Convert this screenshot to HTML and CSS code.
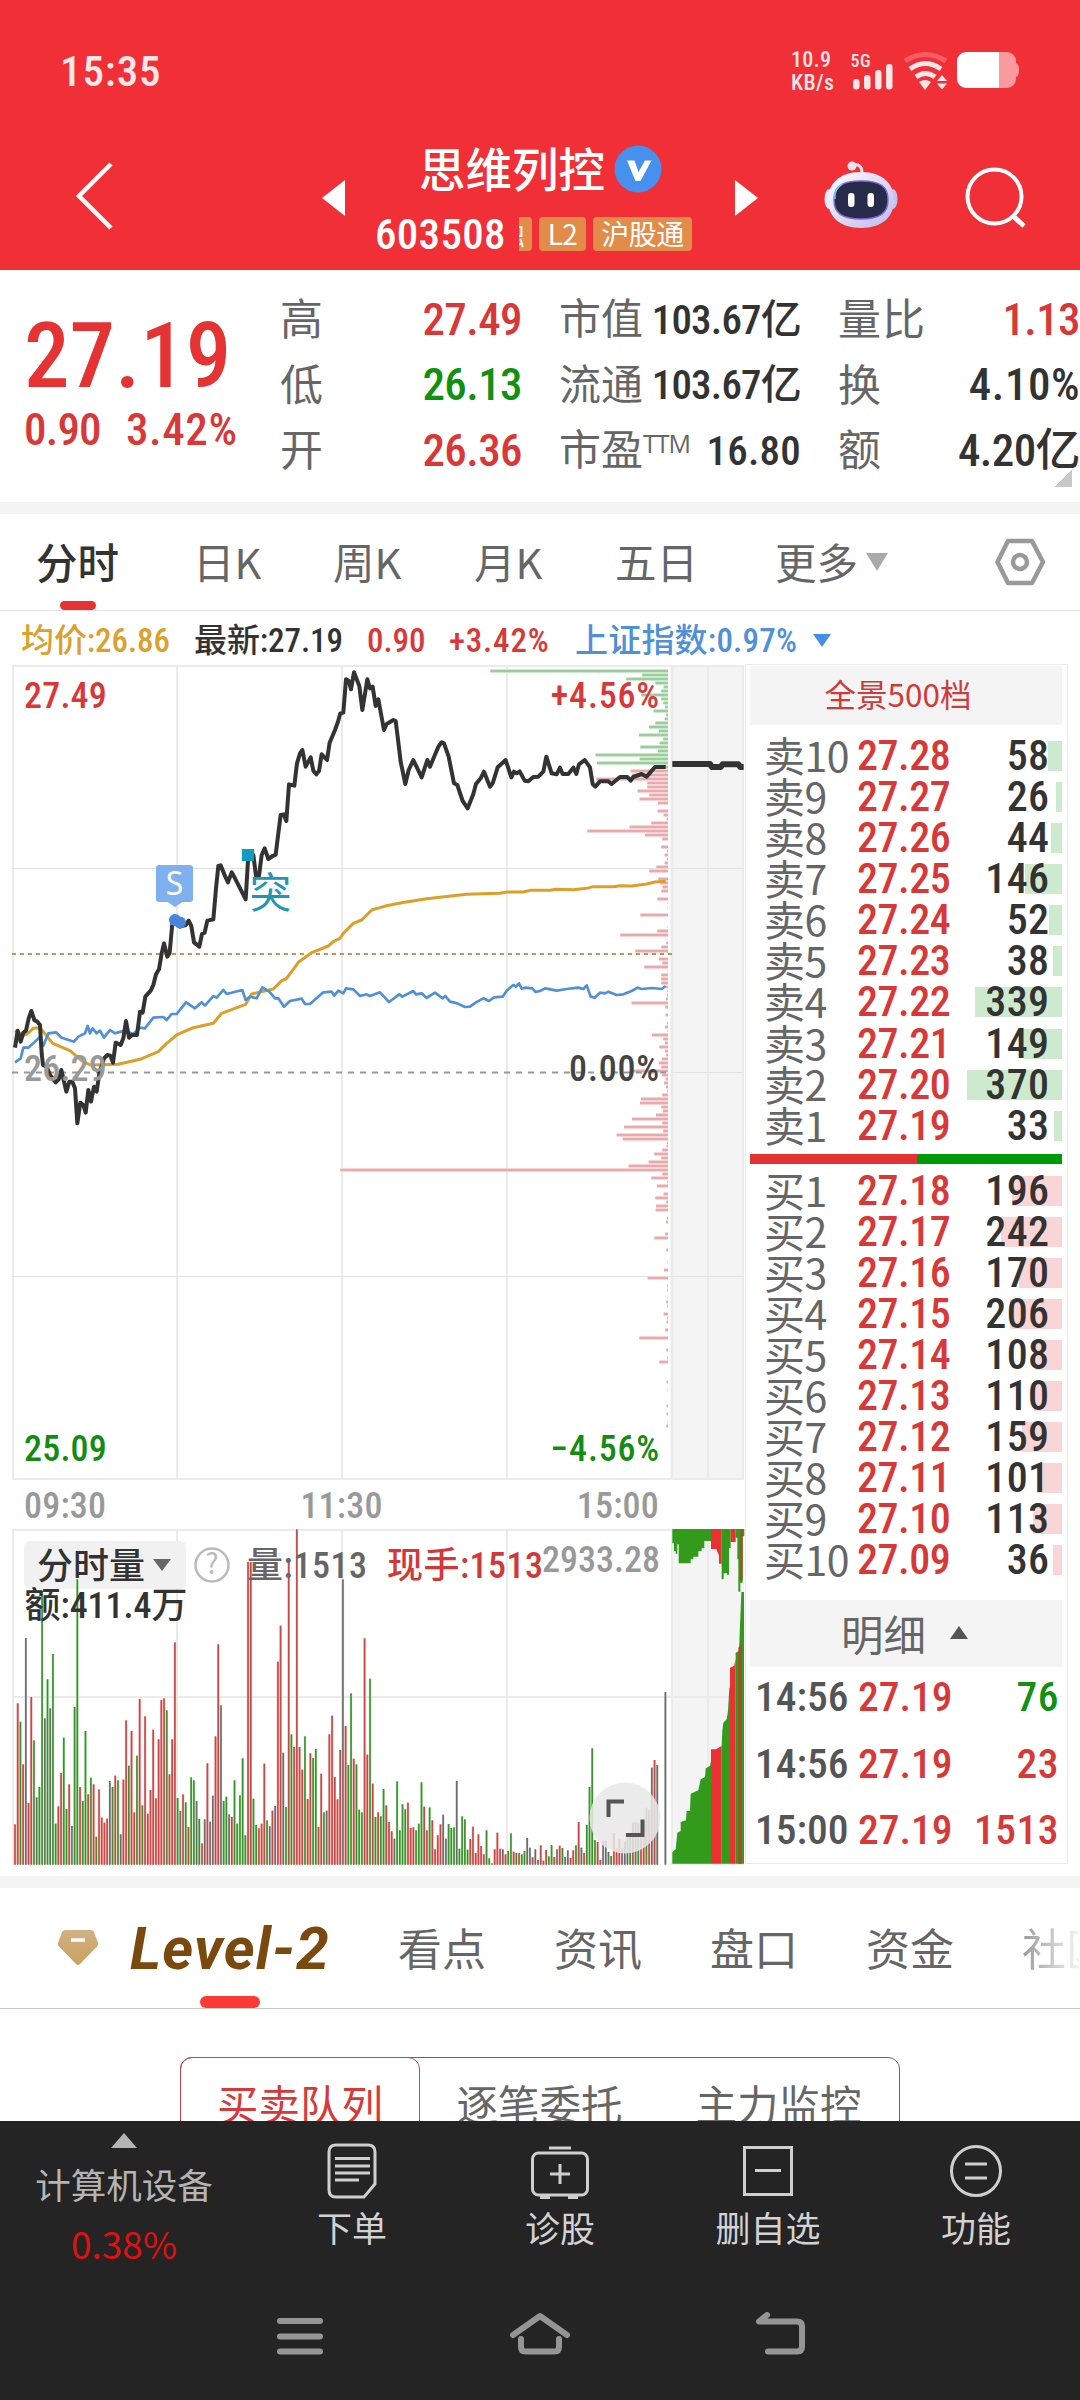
FILE: index.html
```html
<!DOCTYPE html>
<html lang="zh-CN">
<head>
<meta charset="utf-8">
<title>思维列控 603508</title>
<link rel="stylesheet" href="styles.css">
</head>
<body>
<div class="screen">

<header class="top">
  <div class="status">
    <span class="clock">15:35</span>
    <div class="net"><span>10.9</span><span>KB/s</span></div>
    <svg class="status-icons" width="170" height="44" viewBox="850 50 170 44">
      <text x="850.5" y="67.500" class="g5">5G</text>
      <g fill="#ffe6e7">
        <rect x="853" y="80" width="6.500" height="10.500" rx="3"/>
        <rect x="864" y="76" width="6.500" height="14.500" rx="3"/>
        <rect x="875" y="71" width="6.500" height="19.500" rx="3"/>
        <rect x="886" y="65" width="6.500" height="25.500" rx="3"/>
        <path d="M919 83q6-4 12 0l-6 8z"/>
        <path d="M942 76l5 6h-10zM942 90.500l5-6h-10z"/>
      </g>
      <g fill="none" stroke="#ffe6e7" stroke-width="5">
        <path d="M905 62q20-13 41 0" opacity=".25"/>
        <path d="M910 70q15-11 31 0"/>
        <path d="M916 78q9.500-7 19 0"/>
      </g>
      <path d="M998 53h9a9 9 0 0 1 9 9v2q3 1 3 7t-3 7v2a9 9 0 0 1-9 9h-9z" fill="#fa9a9e"/>
      <path d="M966 53h33v36h-33a9 9 0 0 1-9-9v-18a9 9 0 0 1 9-9z" fill="#fff"/>
    </svg>
  </div>
  <nav class="titlebar">
    <svg class="back" width="40" height="70" viewBox="0 0 40 70"><path d="M36 4L4 36l32 32" fill="none" stroke="#fff" stroke-width="4.500"/></svg>
    <svg width="23" height="36" viewBox="0 0 23 36"><path d="M23 0v36L0 18z" fill="#fff"/></svg>
    <div class="stock">
      <div class="name"><span>思维列控</span>
        <svg width="48" height="48" viewBox="0 0 48 48"><circle cx="24" cy="24" r="23.500" fill="#4690ee"/><path d="M13 15.500h7.500l4 11.500 6.500-11.500h6.500L26.500 36h-5z" fill="#fff"/></svg>
      </div>
      <div class="code"><span class="num">603508</span><span class="tag cut"><i>融</i></span><span class="tag">L2</span><span class="tag wide">沪股通</span></div>
    </div>
    <svg width="23" height="36" viewBox="0 0 23 36"><path d="M0 0v36l23-18z" fill="#fff"/></svg>
    <svg class="robot" width="74" height="68" viewBox="824 161 74 68">
      <defs><linearGradient id="shell" x1="0" y1="0" x2="1" y2="1"><stop offset="0" stop-color="#fff"/><stop offset="1" stop-color="#bdb9ec"/></linearGradient></defs>
      <path d="M852 166c6-3 10 0 10 7" fill="none" stroke="#e6e2f6" stroke-width="3"/>
      <circle cx="852" cy="166" r="4.500" fill="#f1dfe9"/>
      <ellipse cx="829" cy="199" rx="4.500" ry="10" fill="#e8e6fa"/><ellipse cx="893" cy="199" rx="4.500" ry="10" fill="#c5c2ee"/>
      <path d="M861 172c23 0 33 13 33 28 0 17-12 28-33 28s-33-11-33-28c0-15 10-28 33-28z" fill="url(#shell)"/>
      <path d="M861 181c20 0 27 6 27 19s-8 19-27 19-27-6-27-19 7-19 27-19z" fill="#252b49" stroke="#8065d2" stroke-width="1.500"/>
      <path d="M842 184q-8 5-7 15" fill="none" stroke="#78cfe7" stroke-width="1.500"/>
      <rect x="848" y="193" width="6.500" height="14" rx="3" fill="#fff"/><rect x="867.500" y="193" width="6.500" height="14" rx="3" fill="#fff"/>
    </svg>
    <svg class="search" width="64" height="64" viewBox="964 166 64 64"><g fill="none" stroke="#fff" stroke-width="4"><circle cx="994.500" cy="196.500" r="27"/><path d="M1013 216l11 10" stroke-width="5"/></g></svg>
  </nav>
</header>

<section class="quote">
  <div class="last">
    <div class="big">27.19</div>
    <div class="chg"><span>0.90</span><span>3.42%</span></div>
  </div>
  <dl class="stats">
    <div><dt>高</dt><dd class="red">27.49</dd></div>
    <div><dt>低</dt><dd class="green">26.13</dd></div>
    <div><dt>开</dt><dd class="red">26.36</dd></div>
  </dl>
  <dl class="stats mid">
    <div><dt>市值</dt><dd>103.67亿</dd></div>
    <div><dt>流通</dt><dd>103.67亿</dd></div>
    <div><dt>市盈<sup>TTM</sup></dt><dd class="pe">16.80</dd></div>
  </dl>
  <dl class="stats end">
    <div><dt>量比</dt><dd class="red">1.13</dd></div>
    <div><dt>换</dt><dd class="rate">4.10%</dd></div>
    <div><dt>额</dt><dd>4.20亿</dd></div>
  </dl>
  <i class="corner"></i>
</section>

<nav class="periods">
  <span class="on">分时</span><span>日K</span><span>周K</span><span>月K</span><span>五日</span><span>更多</span>
  <svg class="more" width="24" height="20" viewBox="0 0 24 20"><path d="M1 1h22L12 19z" fill="#aaa"/></svg>
  <svg class="hex" width="50" height="48" viewBox="0 0 50 48"><g fill="none" stroke="#999" stroke-width="4.500" stroke-linejoin="round"><path d="M13 3h24l11 21-11 21H13L2.500 24z"/><circle cx="25" cy="24" r="7"/></g></svg>
</nav>

<main class="market">
  <section class="charts">
    <div class="legend">
      <span class="gold">均价:26.86</span><span>最新:27.19</span><span class="red">0.90</span><span class="red">+3.42%</span><span class="blue">上证指数:0.97%</span>
      <svg width="20" height="15" viewBox="0 0 20 15"><path d="M1 1h18l-9 13z" fill="#4490e6"/></svg>
    </div>
    <svg class="price" width="745" height="815" viewBox="0 665 745 815">
      <rect x="672" y="665" width="72" height="814" fill="#f4f4f4"/>
      <g stroke="#ebebeb" stroke-width="2" fill="none">
        <path d="M13 665v815M177 665v815M342 665v815M507 665v815M743 665v815M708 665v815M12 666h732M12 1479h732"/>
        <path d="M672 665v815" stroke-width="3"/>
        <path d="M12 868.500h732M12 1276.500h732M672 1072.500h72" stroke="#e2e2e2" stroke-width="1"/>
      </g>
      <g id="profile"></g>
      <path d="M12 1072.500h654" stroke="#999" stroke-width="2" stroke-dasharray="6 6"/>
      <path d="M12 954h660" stroke="#cb9151" stroke-width="2" stroke-dasharray="4 4"/>
      <g transform="translate(0 640) scale(.33333)" fill="none" stroke-linejoin="round">
        <polyline stroke="#dd9f28" stroke-width="9" points="45,1172 70,1185 80,1183 100,1165 120,1163 158,1210 210,1232 245,1262 270,1275 355,1273 420,1258 475,1235 500,1210 530,1185 580,1163 640,1150 665,1120 737,1093 755,1062 820,1047 845,1022 858,1017 880,988 895,967 935,938 985,918 1000,905 1020,895 1030,880 1060,850 1085,840 1115,810 1140,803 1160,797 1205,788 1280,776 1400,763 1500,760 1520,756 1570,756 1590,751 1650,751 1670,748 1720,749 1760,745 1780,740 1840,740 1860,737 1895,738 1940,732 1965,726 1997,724"/>
        <polyline stroke="#4f90d9" stroke-width="8" points="45,1267 62,1255 70,1223 85,1223 100,1210 120,1190 130,1217 145,1180 168,1177 185,1193 222,1205 235,1190 255,1180 263,1158 270,1180 278,1165 290,1180 300,1172 312,1193 330,1170 345,1180 375,1172 400,1182 420,1163 435,1165 460,1133 490,1131 500,1140 515,1122 530,1122 558,1087 585,1105 605,1087 615,1097 640,1068 650,1073 670,1050 680,1062 727,1050 737,1080 750,1070 770,1075 787,1042 808,1055 825,1075 835,1075 852,1100 870,1083 905,1076 915,1092 930,1092 970,1057 995,1055 1003,1067 1015,1052 1030,1060 1038,1045 1060,1048 1080,1068 1100,1063 1110,1068 1140,1057 1167,1086 1198,1063 1207,1070 1240,1053 1248,1063 1265,1060 1280,1074 1305,1058 1328,1075 1336,1068 1350,1085 1372,1090 1395,1101 1410,1100 1428,1087 1450,1075 1467,1083 1482,1072 1508,1070 1520,1052 1540,1035 1548,1040 1557,1030 1565,1046 1575,1043 1597,1045 1607,1056 1620,1053 1635,1045 1670,1052 1700,1047 1735,1043 1750,1047 1760,1036 1772,1070 1784,1073 1800,1058 1815,1060 1825,1055 1850,1065 1870,1063 1895,1053 1913,1043 1925,1047 1955,1044 1985,1047 1997,1038"/>
        <polyline stroke="#333" stroke-width="12" points="45,1223 53,1172 62,1205 70,1178 78,1172 86,1135 94,1113 103,1140 112,1145 120,1155 125,1240 129,1275 140,1280 150,1305 167,1327 176,1318 184,1290 199,1355 208,1325 217,1325 225,1345 232,1450 241,1388 250,1395 257,1418 265,1350 273,1385 282,1340 290,1355 298,1300 312,1255 322,1245 331,1247 339,1268 347,1208 362,1215 370,1195 378,1143 387,1193 396,1185 411,1185 420,1115 428,1118 436,1070 452,1052 460,1035 468,1003 477,988 485,940 492,910 502,950 509,938 517,850 523,830 540,860 557,855 566,842 574,858 582,907 598,920 606,882 614,878 622,842 640,838 648,745 655,678 662,676 675,708 684,727 695,697 705,715 737,778 745,645 760,645 768,708 777,708 785,645 794,625 805,657 818,648 827,644 835,580 842,525 851,523 859,543 867,433 883,437 891,370 900,340 907,330 917,380 932,352 940,392 949,403 957,393 965,343 981,360 989,308 1005,270 1014,245 1021,220 1030,218 1038,118 1046,122 1053,148 1062,97 1078,138 1087,210 1102,118 1110,145 1118,140 1127,198 1135,178 1152,270 1160,252 1180,240 1187,243 1193,290 1202,365 1216,432 1226,390 1240,360 1265,412 1282,360 1290,380 1315,320 1325,307 1332,310 1346,350 1355,395 1362,430 1372,435 1388,483 1403,505 1420,462 1428,432 1442,415 1452,395 1470,440 1478,430 1493,382 1503,373 1517,360 1534,412 1542,395 1550,400 1559,394 1574,422 1585,424 1600,411 1615,410 1630,395 1639,350 1655,400 1670,403 1680,383 1688,402 1705,402 1720,383 1729,402 1737,373 1754,360 1770,382 1778,432 1786,440 1800,424 1825,424 1835,432 1860,411 1882,411 1892,422 1900,411 1925,402 1940,410 1965,381 1997,381"/>
        <polyline stroke="#333" stroke-width="18" points="2017,372 2130,372 2136,381 2162,381 2168,373 2215,373 2221,381 2231,381"/>
      </g>
      <rect x="156" y="865" width="37" height="37" rx="3" fill="#7fb1f1"/><path d="M166 901h18l-9 6z" fill="#7fb1f1"/>
      <text x="174.500" y="895" class="s-mark">S</text>
      <circle cx="175" cy="920" r="6" fill="#4787de"/><circle cx="180" cy="922.500" r="6" fill="#4787de"/>
      <rect x="242" y="849" width="12" height="12" fill="#0f9dc0"/>
      <text x="249.500" y="908" class="tu">突</text>
      <g class="axis">
        <text x="24" y="708" fill="#d93838">27.49</text>
        <text x="660" y="708" fill="#d93838" text-anchor="end" class="pct">+4.56%</text>
        <text x="24" y="1080.500" fill="#999">26.29</text>
        <text x="660" y="1080.500" fill="#444" text-anchor="end" class="pct">0.00%</text>
        <text x="24" y="1461" fill="#128d12">25.09</text>
        <text x="660" y="1461" fill="#128d12" text-anchor="end" class="pct">−4.56%</text>
      </g>
    </svg>
    <div class="times"><span>09:30</span><span>11:30</span><span>15:00</span></div>
    <svg class="volume" width="745" height="336" viewBox="0 1528 745 336">
      <rect x="672" y="1528" width="72" height="335" fill="#f4f4f4"/>
      <g stroke="#ebebeb" stroke-width="2" fill="none">
        <path d="M13 1528v336M177 1528v336M342 1528v336M507 1528v336M672 1528v336M708 1528v336M12 1529h732M12 1696h732M670 1863h74"/>
      </g>
      <rect x="24" y="1540" width="162" height="48" rx="6" fill="#f1f1f1"/>
      <g id="bars"></g>
      <g transform="translate(370 1500) scale(.33333)">
        <g fill="#329b1c">
          <path d="M907 84v43h5v23h5v8h5v-28h4v57h36v-12h8v-8h15v-16h10v-9h8v-22h20V84zM1055 84v151h6v-18h10v4h6v-80h5V84zM1097 84v26h5v65h3v97h6v-27h7V106h5V84z"/>
          <path d="M907 1088v-35l10-8 5-50 10-5v-27l16-5 2-28h10l2-52 23-10 7-33 13-7 2-26 13-7 3-15v308zM1055 1088V735l2-45 3-25 10-10 4-25 4-70h2v528zM1097 1088V455l10-5 7-177h8v815z"/>
        </g>
        <g fill="#e83130">
          <path d="M1023 84v60h16l8 20v24h8V84zM1082 84v39h15V84z"/>
          <path d="M1023 1088V745h15l17-10v353zM1080 1088V500l12-5 5-20v613z"/>
        </g>
        <path d="M1105 1088V440l10-12v660zM1111 84h7v152h-7z" fill="#a44f28"/>
      </g>
      <circle cx="625" cy="1817" r="35.500" fill="#e8e8e8" fill-opacity=".86"/>
      <path d="M608.500 1816v-15.500H624M626 1834h16.500v-15.500" fill="none" stroke="#555" stroke-width="4"/>
      <text x="37" y="1578" class="vt dark">分时量</text>
      <path d="M153 1558h18l-9 12z" fill="#666"/>
      <circle cx="212" cy="1564" r="16.500" fill="none" stroke="#bbb" stroke-width="2.500"/>
      <text x="212" y="1573" class="qm">?</text>
      <text x="247" y="1577" class="vt" fill="#666" textLength="120">量:1513</text>
      <text x="387" y="1577" class="vt" fill="#d13838" textLength="156">现手:1513</text>
      <text x="660" y="1571" class="vt" fill="#999" text-anchor="end">2933.28</text>
      <text x="24.500" y="1617" class="vt dark" textLength="163">额:411.4万</text>
    </svg>
  </section>

  <aside class="book">
    <button class="depth">全景500档</button>
    <ul class="levels">
      <li>卖10<b>27.28</b><em>58</em><i style="width:14px"></i></li>
      <li>卖9<b>27.27</b><em>26</em><i style="width:6px"></i></li>
      <li>卖8<b>27.26</b><em>44</em><i style="width:11px"></i></li>
      <li>卖7<b>27.25</b><em>146</em><i style="width:37px"></i></li>
      <li>卖6<b>27.24</b><em>52</em><i style="width:13px"></i></li>
      <li>卖5<b>27.23</b><em>38</em><i style="width:9px"></i></li>
      <li>卖4<b>27.22</b><em>339</em><i style="width:87px"></i></li>
      <li>卖3<b>27.21</b><em>149</em><i style="width:38px"></i></li>
      <li>卖2<b>27.20</b><em>370</em><i style="width:95px"></i></li>
      <li>卖1<b>27.19</b><em>33</em><i style="width:8px"></i></li>
    </ul>
    <div class="ratio"><i></i></div>
    <ul class="levels buy">
      <li>买1<b>27.18</b><em>196</em><i style="width:50px"></i></li>
      <li>买2<b>27.17</b><em>242</em><i style="width:61px"></i></li>
      <li>买3<b>27.16</b><em>170</em><i style="width:43px"></i></li>
      <li>买4<b>27.15</b><em>206</em><i style="width:52px"></i></li>
      <li>买5<b>27.14</b><em>108</em><i style="width:27px"></i></li>
      <li>买6<b>27.13</b><em>110</em><i style="width:28px"></i></li>
      <li>买7<b>27.12</b><em>159</em><i style="width:40px"></i></li>
      <li>买8<b>27.11</b><em>101</em><i style="width:25px"></i></li>
      <li>买9<b>27.10</b><em>113</em><i style="width:29px"></i></li>
      <li>买10<b>27.09</b><em>36</em><i style="width:9px"></i></li>
    </ul>
    <button class="detail">明细<svg width="18" height="13" viewBox="0 0 18 13"><path d="M0 13L9 0l9 13z" fill="#555"/></svg></button>
    <ul class="ticks">
      <li><span>14:56</span><b>27.19</b><em class="green">76</em></li>
      <li><span>14:56</span><b>27.19</b><em>23</em></li>
      <li><span>15:00</span><b>27.19</b><em>1513</em></li>
    </ul>
  </aside>
</main>

<nav class="tabs">
  <svg width="44" height="40" viewBox="0 0 44 40"><defs><linearGradient id="gem" x1="0" y1="0" x2="0" y2="1"><stop offset="0" stop-color="#d1b084"/><stop offset="1" stop-color="#c8a25e"/></linearGradient></defs><path d="M9 2h26q2 0 3 2l4 11q.5 2-1 3.500L24 36q-2 2-4 0L3 18.500Q1.500 17 2 15L6 4q1-2 3-2z" fill="url(#gem)"/><path d="M15 12h14" stroke="#fff" stroke-width="3.500"/></svg>
  <span class="level">Level-2</span><span>看点</span><span>资讯</span><span>盘口</span><span>资金</span><span class="fade">社区</span>
</nav>

<div class="queue"><div class="seg"><span class="on">买卖队列</span><span>逐笔委托</span><span>主力监控</span></div></div>

<footer class="dock">
  <div class="actions">
    <div class="sector"><svg width="26" height="15" viewBox="0 0 26 15"><path d="M0 15L13 0l13 15z" fill="#b4b4b4"/></svg><span>计算机设备</span><b>0.38%</b></div>
    <div class="act"><svg width="60" height="60" viewBox="0 0 60 60"><path d="M14 4h32q7 0 7 7v32L42 56H14q-7 0-7-7V11q0-7 7-7z"/><path d="M13 17.500h35M13 25h35M13 32h35M13 39h24"/></svg><span>下单</span></div>
    <div class="act"><svg width="60" height="60" viewBox="0 0 60 60"><rect x="2.500" y="12" width="55" height="42" rx="6"/><path d="M19 7h22M20 33h20M30 23v20"/><path d="M10 56h10M38 56h10" stroke-width="4"/></svg><span>诊股</span></div>
    <div class="act"><svg width="60" height="60" viewBox="0 0 60 60"><rect x="6.500" y="6.500" width="47" height="47"/><path d="M17 29.500h26"/></svg><span>删自选</span></div>
    <div class="act"><svg width="60" height="60" viewBox="0 0 60 60"><circle cx="30" cy="30" r="24.500"/><path d="M19 23h22M19 37h22"/></svg><span>功能</span></div>
  </div>
  <div class="sysnav">
    <svg width="60" height="50" viewBox="0 0 60 50"><path d="M10 9h40M10 24.500h40M10 39.500h40"/></svg>
    <svg width="60" height="50" viewBox="0 0 60 50"><path d="M3 23L30 4l27 19M11 27v8q0 4.500 4.500 4.500h29q4.500 0 4.500-4.500v-8" stroke-linejoin="round"/></svg>
    <svg width="60" height="50" viewBox="0 0 60 50"><path d="M17 3L9 9.500h38q5 0 5 5v20q0 5-5 5H18" stroke-linejoin="round"/></svg>
  </div>
</footer>

</div>
<script src="charts.js"></script>
</body>
</html>
```
FILE: styles.css
```css
* { box-sizing: border-box; }
body, ul, dl, dd { margin: 0; padding: 0; }
body { background: #fff; }
.screen { width: 1080px; height: 2400px; overflow: hidden; display: flex; flex-direction: column; color: #333; font-family: "Roboto Condensed", "Noto Sans CJK SC", sans-serif; font-weight: 500; background: #fff; }
svg { flex: none; display: block; }
i, em { font-style: normal; }
b { font-weight: 500; }
.red { color: #d93838; }
.green { color: #129012; }

.top { flex: none; height: 270px; background: #f12f37; color: #fff; }
.status { height: 142px; display: flex; align-items: center; padding-left: 60px; color: #ffe6e7; }
.clock { width: 731px; font-size: 43px; letter-spacing: .9px; }
.net { width: 59px; display: flex; flex-direction: column; font-size: 22px; line-height: 23px; letter-spacing: .3px; }
.g5 { font-size: 18px; fill: #ffe6e7; letter-spacing: .5px; font-family: "Roboto Condensed", sans-serif; font-weight: 500; }
.titlebar { height: 128px; display: flex; align-items: flex-start; }
.titlebar > svg { margin-top: 38px; }
.titlebar .back { margin: 18px 207px 0 75px; }
.stock { width: 390px; padding-top: 1px; }
.name { display: flex; align-items: center; height: 52px; padding-left: 74px; font-size: 46.500px; font-family: "Noto Sans CJK SC", sans-serif; gap: 9px; }
.name span { line-height: 46px; margin-top: -4px; }
.code { display: flex; align-items: center; height: 34px; margin-top: 22px; padding-left: 30px; font-size: 43px; }
.num { width: 144px; letter-spacing: .3px; }
.tag { height: 34px; line-height: 33px; width: 47px; margin-right: 7px; border-radius: 4px; background: #e38c49; font-size: 28px; text-align: center; font-family: "Noto Sans CJK SC", sans-serif; font-weight: 400; letter-spacing: -.5px; }
.tag.cut { width: 13px; border-radius: 0 4px 4px 0; overflow: hidden; display: flex; justify-content: flex-end; padding-right: 8px; }
.tag.wide { width: 99px; margin: 0; }
.titlebar .robot { margin: 19px 0 0 66px; }
.titlebar .search { margin: 24px 0 0 66px; }

.quote { flex: none; height: 232px; display: flex; padding-top: 17px; position: relative; }
.last { width: 280px; padding-left: 24px; }
.big { font-size: 91px; line-height: 100px; margin-top: 19px; color: #e53232; }
.chg { display: flex; font-size: 45px; line-height: 50px; margin-top: -1px; color: #d93838; }
.chg span:first-child { width: 102px; letter-spacing: -.8px; }
.chg span:last-child { letter-spacing: .6px; }
.stats { width: 242px; margin-right: 37px; font-size: 45px; }
.stats > div { height: 65.500px; display: flex; justify-content: space-between; align-items: center; }
.stats dt { font-size: 43px; color: #666; line-height: 60px; display: flex; font-weight: 400; margin-top: 1px; }
.stats dd { line-height: 60px; white-space: nowrap; letter-spacing: -.6px; }
.stats.mid dt { font-size: 42px; }
.stats.mid dd { font-size: 41px; letter-spacing: -.8px; }
.stats .pe.pe { letter-spacing: .2px; }
.stats .rate { letter-spacing: .5px; }
.stats.end { margin-right: 0; }
.stats.end dt { letter-spacing: 1px; }
.stats sup { font-family: "Open Sans", sans-serif; font-size: 25px; line-height: 44px; letter-spacing: -1px; vertical-align: top; }
.corner { position: absolute; right: 8px; bottom: 15px; width: 18px; height: 17px; background: linear-gradient(135deg, transparent 50%, #c8c8c8 50%); }

.periods { flex: none; height: 109px; border-top: 12px solid #f4f4f4; border-bottom: 1px solid #e2e2e2; display: flex; align-items: center; font-family: "Noto Sans CJK SC", sans-serif; font-size: 41.500px; color: #666; font-weight: 400; padding-left: 36px; }
.periods span { height: 100%; line-height: 94px; white-space: nowrap; }
.periods span:nth-child(1) { width: 157px; }
.periods span:nth-child(2) { width: 140px; }
.periods span:nth-child(3) { width: 141px; }
.periods span:nth-child(4) { width: 141px; }
.periods span:nth-child(5) { width: 160px; }
.periods span:nth-child(6) { width: 90px; }
.periods .on { color: #333; font-weight: 500; position: relative; }
.periods .on::after { content: ""; position: absolute; left: 24px; bottom: 0; width: 36px; height: 9px; border-radius: 5px; background: #e53232; }
.hex { margin-left: 106px; }

.market { flex: none; height: 1265px; display: flex; }
.charts { width: 745px; }
.legend { height: 54px; display: flex; align-items: center; padding: 5px 0 0 21px; font-size: 33px; white-space: nowrap; width: 900px; line-height: 49px; }
.legend span { width: 173px; letter-spacing: -.1px; }
.legend span:nth-child(3) { width: 82px; }
.legend span:nth-child(4) { width: 126px; letter-spacing: .8px; }
.legend span:nth-child(5) { width: 237px; letter-spacing: .2px; }
.gold { color: #dca02c; }
.blue { color: #4f90d9; }
.axis { font-size: 36px; letter-spacing: .2px; }
.axis .pct { letter-spacing: .8px; }
.s-mark { font: 400 32px "Noto Sans", sans-serif; fill: #fff; text-anchor: middle; }
.tu { font: 400 42px "Noto Sans CJK SC", sans-serif; fill: #2196b4; }
.times { height: 49px; display: flex; padding: 3px 86px 0 24px; justify-content: space-between; font-size: 36px; line-height: 46px; color: #999; letter-spacing: .2px; }
.vt { font-size: 36px; }
.dark { fill: #333; }
.qm { font: 400 28px "Noto Sans CJK SC", sans-serif; fill: #bbb; text-anchor: middle; }

.book { width: 323px; height: 1200px; margin-top: 53px; border: 1px solid #ebebeb; padding: 1px 4px 0; }
button { display: flex; border: 0; padding: 0; width: 312px; justify-content: center; align-items: center; background: #f4f4f4; font-family: "Noto Sans CJK SC", sans-serif; }
.depth { height: 59px; font-size: 31.500px; color: #cf3a3a; padding: 0 16px 5px 0; }
.levels, .ticks { list-style: none; }
.levels { padding-top: 9.500px; width: 312px; }
.levels li { height: 41.170px; position: relative; padding-left: 14px; font: 400 41px/39px "Noto Sans CJK SC", sans-serif; color: #666; letter-spacing: -.5px; }
.levels b, .levels em { font: 500 42px/41px "Roboto Condensed", sans-serif; z-index: 1; top: 0; }
.levels b { position: absolute; left: 107px; color: #d93838; letter-spacing: -.5px; }
.levels em { position: absolute; right: 12.500px; color: #333; letter-spacing: .4px; }
.levels i { position: absolute; right: 0; top: 6px; height: 30px; background: #cdeace; }
.levels.buy { padding-top: 6px; }
.buy li { height: 40.950px; line-height: 39px; }
.buy i { background: #f9d5d6; }
.ratio { height: 10px; margin-top: 8px; width: 312px; background: #009a05; }
.ratio i { display: block; height: 10px; width: 167px; background: #e53232; }
.detail { height: 67px; margin-top: 20.500px; font-size: 42.500px; color: #666; gap: 24px; padding: 0 3px 2px 0; }
.ticks li { height: 66.800px; display: flex; align-items: center; font-size: 41.500px; color: #d93838; padding: 0 3px 8px 5px; width: 312px; }
.ticks span { width: 103px; color: #555; }
.ticks em { margin-left: auto; letter-spacing: .5px; }

.tabs { flex: none; height: 133px; border-top: 12px solid #f4f4f4; border-bottom: 1.500px solid #c8c8c8; display: flex; align-items: center; padding-left: 56px; font: 400 44px "Noto Sans CJK SC", sans-serif; color: #666; white-space: nowrap; }
.tabs span { width: 156px; height: 100%; line-height: 119px; }
.tabs svg { margin: 0 30px 0 0; }
.tabs .level { width: 268px; font: italic 700 59px/121px Roboto, sans-serif; letter-spacing: 1.2px; color: #79490e; position: relative; }
.tabs .level::after { content: ""; position: absolute; left: 70px; bottom: 0; width: 60px; height: 12px; border-radius: 6px; background: #fb3a33; }
.tabs .fade { width: 57px; overflow: hidden; background: linear-gradient(90deg, #999, #f4f4f4); background-clip: text; -webkit-background-clip: text; color: transparent; }

.queue { flex: none; height: 112px; padding: 48px 180px 0; overflow: hidden; }
.seg { display: flex; height: 90px; border: 1.500px solid #666; border-radius: 12px; font: 400 41.500px/91px "Noto Sans CJK SC", sans-serif; color: #666; }
.seg span { width: 239px; text-align: center; white-space: nowrap; }
.seg .on { margin: -1px 0 0 -1px; width: 240px; border: 1.500px solid #c94444; border-radius: 12px; color: #d93838; }

.dock { flex: 1; background: #242424; font-family: "Noto Sans CJK SC", sans-serif; font-weight: 400; }
.actions { height: 170px; display: flex; }
.sector { width: 248px; display: flex; flex-direction: column; align-items: center; color: #b4b4b4; font-size: 35.500px; padding-top: 12px; }
.sector span { line-height: 60px; margin-top: 6px; }
.sector b { color: #dc1212; font-size: 37px; line-height: 58px; font-weight: 400; }
.act { width: 208px; display: flex; flex-direction: column; align-items: center; color: #d2d2d2; font-size: 35px; padding-top: 20px; }
.act span { line-height: 52px; }
.act svg { fill: none; stroke: #cfcfcf; stroke-width: 3; }
.sysnav { display: flex; justify-content: space-between; padding: 21px 270px 0; }
.sysnav svg { fill: none; stroke: #959595; stroke-width: 6; stroke-linecap: round; }
```
FILE: charts.js
```javascript
const NS = 'http://www.w3.org/2000/svg';
function rect(parent, x, y, w, h, fill) {
  const r = document.createElementNS(NS, 'rect');
  Object.entries({ x, y, width: w, height: h, fill }).forEach(([k, v]) => r.setAttribute(k, v));
  parent.appendChild(r);
}

// Traded volume per price level, top price first; thirds of a pixel.
const levels = [533,77,125,38,13,20,80,20,14,8,43,5,10,38,57,27,87,14,25,83,30,217,85,213,10,
  112,107,215,62,62,91,56,85,30,0,31,13,4,50,115,242,69,17,0,20,3,10,3,10,35,56,0,29,23,16,20,0,32,1,1,0,83,0,0,1,32,143,1,5,20,98,0,27,17,71,1,20,20,20,5,2,2,6,109,8,0,7,0,2,9,1,48,14,9,26,8,5,18,27,20,113,17,7,12,6,2,17,81,84,20,15,36,108,17,132,14,154,136,
  3,4,17,41,20,58,118,983,17,50,2,33,0,13,38,5,36,37,0,3,6,0,0,8,41,0,0,5,0,0,1,0,12,0,61,0,2,2,0,1,5,2,0,13,3,4,0,8,0,86,0,0,5,0,2,26,0,0,0,0,4,0,1,0,0,0,4,0,4,0,1,5];
const SOLD = 25;
const profile = document.getElementById('profile');
levels.forEach((n, i) => {
  if (!n) return;
  const w = n / 3, y = 671 + i * 4 - (i > 118 ? 1 : 0), up = i < SOLD;
  rect(profile, 668 - w, y - 2, w, 4, up ? '#c9ebca' : '#fbd3d4');
  rect(profile, 668 - w, y - 1, w, 2, up ? '#9dcc9f' : '#e5acae');
});

// One bar per minute: direction and the bar's top edge.
const minutes = ('r970 r607 g662 r790 k411 r906 r588 g718 k889 g858 g270 k652 g535 k622 g459 g968 r916 r816 g710 g924 ' +
  'r850 k975 g618 g235 r858 g900 g690 r880 g830 r850 g1007 r865 r950 r965 r953 k840 g858 r824 g838 k1000 ' +
  'r836 r658 g794 r690 r934 g764 r594 g913 r646 r938 r867 r686 r892 r715 r597 r592 g628 r820 r715 r424 ' +
  'g891 k930 r880 g904 r978 g829 g838 k900 g954 r1027 k955 r787 k962 k884 r706 r430 k613 g900 g887 k940 ' +
  'r948 g838 g968 g883 g772 g1003 r183 r183 g893 g972 r982 r968 r788 g958 k976 r929 k915 r482 r374 k755 ' +
  'g918 r172 g700 r738 r85 r738 r806 g706 r894 r757 g771 g744 r978 r818 g934 k929 r700 r644 r828 r895 ' +
  'r747 k235 r675 g792 g577 r773 g790 g926 g934 r412 r761 g533 r848 g948 r934 g946 g864 r913 r963 r991 ' +
  'k1013 g841 g988 g910 g925 r905 r981 r979 g988 g968 g844 r917 r988 g919 r958 r1045 r1003 r970 k941 k1013 ' +
  'g969 g981 g979 k840 g1043 g946 g955 g1046 r1014 r977 r1056 r1000 r1035 r1060 g988 g1072 r1087 r1045 r995 r1043 ' +
  'k1045 r1060 g1050 g997 r1052 g1056 r1056 g1060 g1050 k1011 k1040 r1069 k1045 k1077 r1033 r1079 r1047 g1066 g1032 r1068 ' +
  'k1045 r1034 g1041 k1068 k1048 r1071 r1048 g1033 r963 k1040 r1056 g972 g858 g742 g1017 r1023 r1077 k1020 k1020 k1053 ' +
  'g1065 r996 r1043 r1015 k1042 k1022 k1010 g1005 r965 k963 g965 r1000 r960 g920 r928 k800 r777 k792 - - k573').split(' ');
const colors = { r: '#c44a48', g: '#3c8f2f', k: '#6b6b6b' };
const halos = { r: '#fbb9b7', g: '#b7e9af', k: '#d5d5d5' };
const bars = document.getElementById('bars');
minutes.forEach((m, i) => {
  if (m === '-') return;
  const top = 1500 + m.slice(1) / 3, x = 15 + i * 2.71;
  const base = 1863.7;
  rect(bars, x - 1.2, top, 2.4, base - top, halos[m[0]]);
  rect(bars, x - 0.8, top, 1.6, base - top, colors[m[0]]);
});
```
